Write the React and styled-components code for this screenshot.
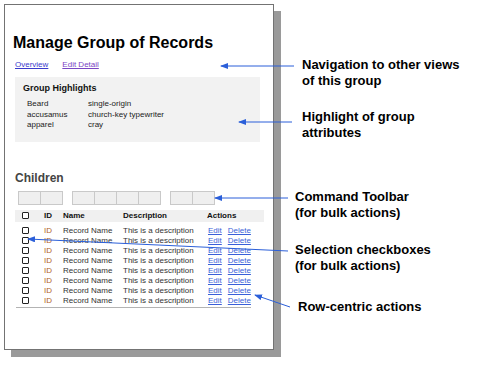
import React from 'react';
import styled, { createGlobalStyle } from 'styled-components';

const GlobalStyle = createGlobalStyle`
  html, body {
    margin: 0;
    padding: 0;
    background: #fff;
  }
  body {
    font-family: "Liberation Sans", Arial, Helvetica, sans-serif;
    color: #111;
  }
`;

const Page = styled.div`
  position: relative;
  width: 477px;
  height: 367px;
  display: flex;
  align-items: flex-start;
  overflow: hidden;
`;

const Sheet = styled.div`
  margin: 4px 0 0 4px;
  width: 270px;
  height: 346px;
  border: 1px solid #737373;
  box-shadow: 7px 7px 0 #9a9a9a;
  background: #fff;
  padding: 29px 0 0 10px;
  box-sizing: border-box;
  display: flex;
  flex-direction: column;
  align-items: flex-start;
`;

const Title = styled.h1`
  margin: 0 0 0 -2px;
  font-size: 16px;
  line-height: 18px;
  font-weight: bold;
  color: #000;
`;

const Nav = styled.nav`
  display: flex;
  gap: 14px;
  margin-top: 8px;
  font-size: 8px;
  line-height: 10px;
`;

const NavLink = styled.a`
  color: ${(p) => (p.$visited ? '#7a45c4' : '#3a3acc')};
  text-decoration: underline;
  cursor: pointer;
`;

const Highlights = styled.section`
  margin-top: 7px;
  width: 245px;
  background: #f2f2f2;
  padding: 6px 8px 11px;
  box-sizing: border-box;
`;

const HighlightsTitle = styled.h3`
  margin: 0;
  font-size: 9px;
  line-height: 11px;
  font-weight: bold;
  color: #111;
`;

const Attrs = styled.div`
  margin: 5px 0 0 4px;
  display: grid;
  grid-template-columns: 61px auto;
  font-size: 8px;
  line-height: 10.5px;
  color: #222;
`;

const Children = styled.h2`
  margin: 29px 0 0;
  font-size: 12px;
  line-height: 14px;
  font-weight: bold;
  color: #444;
`;

const Toolbar = styled.div`
  margin: 6px 0 0 3px;
  display: flex;
  gap: 9px;
`;

const ButtonGroup = styled.div`
  display: flex;
`;

const ToolButton = styled.button`
  width: 23px;
  height: 14px;
  padding: 0;
  background: #efefef;
  border: 1px solid #c9c9c9;
  margin-left: -1px;
  &:first-child {
    margin-left: 0;
  }
`;

const Table = styled.div`
  margin-top: 5px;
  width: 249px;
  font-size: 8px;
`;

const Row = styled.div`
  display: grid;
  grid-template-columns: 29px 19px 60px 84px 1fr;
  align-items: center;
  height: ${(p) => (p.$head ? '12px' : '10px')};
  line-height: 10px;
  background: ${(p) => (p.$head ? '#f0f0f0' : 'transparent')};
  font-weight: ${(p) => (p.$head ? 'bold' : 'normal')};
  color: ${(p) => (p.$head ? '#111' : '#333')};
  margin-bottom: ${(p) => (p.$head ? '4px' : '0')};
`;

const Check = styled.span`
  display: block;
  width: 7px;
  height: 7px;
  margin-left: 7px;
  border: 1px solid #222;
  border-radius: 1px;
  box-sizing: border-box;
  background: #fff;
`;

const IdCell = styled.span`
  color: ${(p) => (p.$head ? '#111' : '#b0621e')};
`;

const Actions = styled.span`
  display: flex;
  gap: 6px;
  padding-left: 1px;
`;

const ActionLink = styled.a`
  color: #3a5fd8;
  text-decoration: underline;
  cursor: pointer;
`;

const TableEnd = styled.div`
  width: 235px;
  margin: 1px 0 0 1px;
  border-top: 1px solid #b3b3b3;
`;

const Notes = styled.div`
  margin-left: 21px;
  display: flex;
  flex-direction: column;
  padding-top: 57px;
`;

const Note = styled.p`
  margin: ${(p) => p.$gap}px 0 0 ${(p) => p.$indent}px;
  font-size: 13px;
  line-height: 16px;
  font-weight: bold;
  color: #000;
  white-space: nowrap;
`;

const Overlay = styled.svg`
  position: absolute;
  left: 0;
  top: 0;
  pointer-events: none;
`;

const attrs = [
  ['Beard', 'single-origin'],
  ['accusamus', 'church-key typewriter'],
  ['apparel', 'cray'],
];

const records = Array.from({ length: 8 }, (_, i) => i);

const arrows = [
  [294, 66, 221, 66],
  [292, 122, 239, 122],
  [288, 198, 215, 198],
  [288, 251, 28, 239],
  [290, 307, 255, 295],
];

export default function App() {
  return (
    <Page>
      <GlobalStyle />
      <Sheet>
        <Title>Manage Group of Records</Title>
        <Nav>
          <NavLink>Overview</NavLink>
          <NavLink $visited>Edit Detail</NavLink>
        </Nav>
        <Highlights>
          <HighlightsTitle>Group Highlights</HighlightsTitle>
          <Attrs>
            {attrs.map(([a, b]) => (
              <React.Fragment key={a}>
                <span>{a}</span>
                <span>{b}</span>
              </React.Fragment>
            ))}
          </Attrs>
        </Highlights>
        <Children>Children</Children>
        <Toolbar>
          {[2, 4, 2].map((n, g) => (
            <ButtonGroup key={g}>
              {Array.from({ length: n }, (_, i) => (
                <ToolButton key={i} />
              ))}
            </ButtonGroup>
          ))}
        </Toolbar>
        <Table>
          <Row $head>
            <Check />
            <IdCell $head>ID</IdCell>
            <span>Name</span>
            <span>Description</span>
            <span>Actions</span>
          </Row>
          {records.map((i) => (
            <Row key={i}>
              <Check />
              <IdCell>ID</IdCell>
              <span>Record Name</span>
              <span>This is a description</span>
              <Actions>
                <ActionLink>Edit</ActionLink>
                <ActionLink>Delete</ActionLink>
              </Actions>
            </Row>
          ))}
        </Table>
        <TableEnd />
      </Sheet>
      <Notes>
        <Note $gap={0} $indent={7}>Navigation to other views<br />of this group</Note>
        <Note $gap={20} $indent={7}>Highlight of group<br />attributes</Note>
        <Note $gap={48} $indent={0}>Command Toolbar<br />(for bulk actions)</Note>
        <Note $gap={21} $indent={0}>Selection checkboxes<br />(for bulk actions)</Note>
        <Note $gap={25} $indent={3}>Row-centric actions</Note>
      </Notes>
      <Overlay width="477" height="367" viewBox="0 0 477 367">
        <defs>
          <marker id="head" markerWidth="8" markerHeight="6" refX="7" refY="3" orient="auto" markerUnits="userSpaceOnUse">
            <path d="M0,0 L8,3 L0,6 Z" fill="#2b5fd9" />
          </marker>
        </defs>
        {arrows.map(([x1, y1, x2, y2], i) => (
          <line key={i} x1={x1} y1={y1} x2={x2} y2={y2} stroke="#2b5fd9" strokeWidth="1" markerEnd="url(#head)" />
        ))}
      </Overlay>
    </Page>
  );
}
